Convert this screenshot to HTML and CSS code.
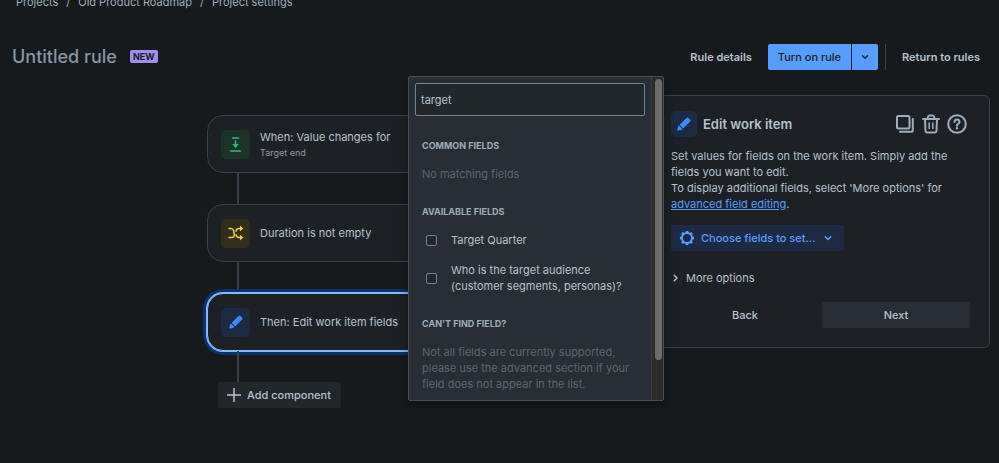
FILE: index.html
```html
<!DOCTYPE html>
<html lang="en">
<head>
	<title>Untitled rule - Project settings</title>
	<meta charset="utf-8">
	<meta name="viewport" content="width=device-width, initial-scale=1">
	<link rel="stylesheet" href="styles.css">
</head>
<body>

	<nav class="breadcrumbs" aria-label="Breadcrumbs">
		<a href="#">Projects</a>
		<span>/</span>
		<a href="#">Old Product Roadmap</a>
		<span>/</span>
		<a href="#">Project settings</a>
	</nav>

	<header class="rule-header">
		<h1 class="rule-title">Untitled rule</h1>
		<span class="badge">NEW</span>
		<div class="rule-actions">
			<button type="button" class="btn btn-link">Rule details</button>
			<div class="split">
				<button type="button" class="btn btn-primary">Turn on rule</button>
				<button type="button" class="btn btn-primary btn-arrow" aria-label="More">
					<svg width="8" height="8" viewBox="0 0 8 8"><path class="line" d="M1.5 2.8 4 5.2 6.5 2.8"/></svg>
				</button>
			</div>
			<span class="divider"></span>
			<button type="button" class="btn btn-link">Return to rules</button>
		</div>
	</header>

	<main class="builder">
		<!-- rule chain -->
		<section class="canvas">
			<div class="chain">
				<div class="card">
					<span class="tile tile-green">
						<svg width="15" height="19" viewBox="0 0 15 19"><path class="line" d="M4.5 3h6M7.5 6v5M2.5 16h10"/><path class="solid" d="M4.3 9h6.4L7.5 13.2z"/></svg>
					</span>
					<div>
						<div class="card-title">When: Value changes for</div>
						<div class="card-sub">Target end</div>
					</div>
				</div>
				<span class="connector"></span>
				<div class="card">
					<span class="tile tile-yellow">
						<svg width="18" height="18" viewBox="0 0 18 18"><path class="line" d="M2 4.5h2.2Q6 4.500 6.600 6.500L7.200 10.500Q7.800 13.500 4.200 13.500H2M9 7.200Q9.600 4.500 12 4.500h2M9 10.800Q9.600 13.500 12 13.500h2"/><path class="solid" d="M13 1.800 16.400 4.500 13 7.200zM13 10.800 16.400 13.500 13 16.200z"/></svg>
					</span>
					<div class="card-title">Duration is not empty</div>
				</div>
				<span class="connector"></span>
				<div class="card card-active">
					<span class="tile tile-blue">
						<svg width="18" height="18" viewBox="0 0 18 18"><path class="solid" d="M11.500 2.900q1-.9 2 0l1.600 1.600q.9 1 0 2L8.200 13.400 4.600 9.800zM3.900 10.600l3.500 3.500-1.200.8-3.400.7q-.6 0-.5-.6l.7-3.300z"/></svg>
					</span>
					<div class="card-title">Then: Edit work item fields</div>
				</div>
				<span class="connector"></span>
				<button type="button" class="btn btn-add">
					<svg width="14" height="14" viewBox="0 0 14 14"><path class="line" d="M7 0v14M0 7h14"/></svg>
					Add component
				</button>
			</div>
		</section>

		<!-- config panel -->
		<aside class="panel">
			<div class="panel-head">
				<span class="tile tile-small tile-blue">
					<svg width="18" height="18" viewBox="0 0 18 18"><path class="solid" d="M11.500 2.900q1-.9 2 0l1.600 1.600q.9 1 0 2L8.200 13.400 4.600 9.800zM3.900 10.600l3.500 3.500-1.200.8-3.400.7q-.6 0-.5-.6l.7-3.300z"/></svg>
				</span>
				<h2 class="panel-title">Edit work item</h2>
				<button type="button" class="icon-btn" aria-label="Duplicate">
					<svg width="20" height="20" viewBox="0 0 20 20"><rect class="thick" x="2" y="2" width="12.500" height="12.500" rx="1.500"/><path class="thick" d="M17.800 5v11.300q0 1.500-1.500 1.500H5"/></svg>
				</button>
				<button type="button" class="icon-btn" aria-label="Delete">
					<svg width="20" height="20" viewBox="0 0 20 20"><path class="thick" d="M2 5h16M6.800 5V3.300Q7 1.500 8.500 1.500h3q1.500 0 1.700 1.800V5M4 5l.5 12q.1 1.500 1.500 1.500h8q1.400 0 1.500-1.500L16 5"/><path class="line" d="M8.200 9v5.500M11.800 9v5.500"/></svg>
				</button>
				<button type="button" class="icon-btn" aria-label="Help">
					<svg width="20" height="20" viewBox="0 0 20 20"><circle class="thick" cx="10" cy="10" r="8.800"/><path class="thick" d="M7.500 8q0-2.500 2.500-2.500T12.500 8q0 1.200-1.300 1.900T10 11.800"/><circle class="solid" cx="10" cy="14.300" r="1.200"/></svg>
				</button>
			</div>

			<p class="panel-text">Set values for fields on the work item. Simply add the fields you want to edit.<br>To display additional fields, select 'More options' for <a href="#">advanced field editing</a>.</p>

			<button type="button" class="btn btn-choose">
				<svg width="16" height="16" viewBox="0 0 16 16"><circle class="thick" cx="8" cy="8" r="5"/><path class="solid" d="M6.300 3.500 6.800.9h2.400l.5 2.600zM6.300 12.500l.5 2.600h2.400l.5-2.600zM3.500 6.300.9 6.800v2.400l2.600.5zM12.500 6.300l2.600.5v2.400l-2.600.5zM3.700 6 2.100 3.800 3.800 2.100 6 3.700zM12.300 6l1.600-2.200-1.700-1.700L10 3.700zM3.700 10l-1.600 2.200 1.700 1.700L6 12.300zM12.300 10l1.600 2.200-1.700 1.700-2.200-1.600z"/></svg>
				Choose fields to set...
				<svg width="8" height="8" viewBox="0 0 8 8"><path class="line" d="M1.200 2.800 4 5.400 6.800 2.800"/></svg>
			</button>

			<button type="button" class="more">
				<svg width="8" height="8" viewBox="0 0 8 8"><path class="line" d="M2.300 1.200 5 4 2.300 6.800"/></svg>
				More options
			</button>

			<div class="panel-foot">
				<button type="button" class="btn">Back</button>
				<button type="button" class="btn btn-next">Next</button>
			</div>

			<!-- field picker, opens over the canvas -->
			<div class="picker">
				<div class="picker-body">
					<input class="search" type="text" value="target" aria-label="Search fields">
					<h3 class="group">Common fields</h3>
					<p class="hint">No matching fields</p>
					<h3 class="group">Available fields</h3>
					<label class="option"><input type="checkbox"><span>Target Quarter</span></label>
					<label class="option"><input type="checkbox"><span>Who is the target audience (customer segments, personas)?</span></label>
					<h3 class="group">Can't find field?</h3>
					<p class="hint">Not all fields are currently supported, please use the advanced section if your field does not appear in the list.</p>
				</div>
				<div class="track"><div class="thumb"></div></div>
			</div>
		</aside>
	</main>

</body>
</html>
```
FILE: styles.css
```css
* {
	box-sizing: border-box;
}
body {
	margin: 0;
	background-color: #161a1d;
	color: #b6c2cf;
	font-family: Inter, "Liberation Sans", sans-serif;
	font-size: 11px;
	line-height: 16px;
	overflow: hidden;
}
h1, h2, h3, p {
	margin: 0;
}
button, input {
	font-family: inherit;
	font-size: inherit;
	line-height: inherit;
	color: inherit;
}
button {
	border: none;
	background: none;
	padding: 0;
}
svg {
	display: block;
	flex: none;
}
.line, .thick {
	fill: none;
	stroke: currentColor;
	stroke-width: 1.5;
	stroke-linecap: round;
	stroke-linejoin: round;
}
.thick {
	stroke-width: 2;
}
.solid {
	fill: currentColor;
}

/* top of page */
.breadcrumbs {
	display: flex;
	gap: 8px;
	margin-top: -6px;
	padding-left: 16px;
	color: #9fadbc;
}
.breadcrumbs a {
	color: inherit;
	text-decoration: none;
}
.rule-header {
	display: flex;
	align-items: center;
	padding: 33px 12px 0;
}
.rule-title {
	color: #8696a7;
	font-size: 18px;
	font-weight: 500;
	line-height: 27px;
}
.badge {
	margin-left: 13px;
	padding: 0 3px;
	border-radius: 2px;
	background-color: #9f8fef;
	color: #1d2125;
	font-size: 9px;
	font-weight: 700;
	line-height: 13px;
}
.rule-actions {
	display: flex;
	align-items: center;
	margin-left: auto;
}
.btn {
	height: 26px;
	border-radius: 2px;
	font-weight: 500;
}
.btn-link {
	padding: 0 7px;
	font-weight: 600;
}
.split {
	display: flex;
	gap: 1px;
	margin: 0 7px 0 9px;
}
.btn-primary {
	padding: 0 10px;
	border-radius: 2px 0 0 2px;
	background-color: #579dff;
	color: #1d2125;
}
.btn-arrow {
	padding: 0 9px;
	border-radius: 0 2px 2px 0;
}
.divider {
	width: 1px;
	height: 26px;
	margin-right: 9px;
	background-color: #39424a;
}

/* rule chain */
.builder {
	display: flex;
	align-items: flex-start;
	padding: 25px 9px 0 12px;
}
.canvas {
	flex: 1;
	display: flex;
	justify-content: center;
	padding-top: 20px;
}
.chain {
	display: flex;
	flex-direction: column;
	align-items: flex-start;
	width: 248px;
}
.card {
	display: flex;
	align-items: center;
	gap: 10px;
	width: 100%;
	height: 58px;
	padding-left: 13px;
	border: 1px solid #39424a;
	border-radius: 16px;
	background-color: #1d2125;
}
.card-active {
	border-color: #85b8ff;
	box-shadow: 0 0 0 1px #85b8ff, 0 0 0 4px #09326c;
}
.card-title {
	line-height: 18px;
}
.card-sub {
	color: #8c9bab;
	font-size: 9px;
	line-height: 14px;
}
.tile {
	display: flex;
	align-items: center;
	justify-content: center;
	width: 29px;
	height: 29px;
	border-radius: 5px;
}
.tile-small {
	width: 26px;
	height: 26px;
}
.tile-green {
	background-color: #1c3329;
	color: #2abb7f;
}
.tile-yellow {
	background-color: #332e1b;
	color: #f5cd47;
}
.tile-blue {
	background-color: #1c2b41;
	color: #388bff;
}
.connector {
	width: 2px;
	height: 31px;
	margin-left: 30px;
	background-color: #39424a;
}
.btn-add {
	display: flex;
	align-items: center;
	gap: 6px;
	margin-left: 11px;
	padding: 0 10px 0 9px;
	background-color: #22272b;
}

/* config panel */
.panel {
	position: relative;
	width: 340px;
	padding: 15px 19px 19px 20px;
	border: 1px solid #39424a;
	border-radius: 6px;
	background-color: #1d2125;
}
.panel-head {
	display: flex;
	align-items: center;
	gap: 6px;
}
.panel-title {
	flex: 1;
	font-size: 13px;
	font-weight: 600;
}
.icon-btn {
	color: #9fadbc;
}
.icon-btn:last-child {
	margin-right: 3px;
}
.panel-text {
	margin-top: 11px;
}
.panel-text a {
	color: #579dff;
}
.btn-choose {
	display: flex;
	align-items: center;
	gap: 6px;
	margin-top: 13px;
	padding: 0 12px 0 8px;
	background-color: #1c2b41;
	color: #579dff;
}
.btn-choose svg:last-child {
	margin-left: 2px;
}
.more {
	display: flex;
	align-items: center;
	gap: 6px;
	margin-top: 19px;
	padding-left: 1px;
}
.panel-foot {
	display: grid;
	grid-template-columns: 1fr 1fr;
	gap: 3px;
	margin-top: 16px;
}
.btn-next {
	background-color: #282e33;
}

/* field picker */
.picker {
	position: absolute;
	top: -20px;
	left: -243px;
	display: flex;
	width: 256px;
	border: 1px solid #454f59;
	border-radius: 2px;
	background-color: #282e33;
	box-shadow: 0 4px 8px rgba(3, 4, 4, 0.4);
}
.picker-body {
	flex: 1;
	padding: 6px 6px 8px;
}
.search {
	display: block;
	width: 100%;
	height: 33px;
	padding: 0 5px;
	border: 1px solid #738496;
	border-radius: 2px;
	outline: none;
	background-color: #22272b;
}
.group {
	margin: 22px 0 12px 7px;
	color: #9fadbc;
	font-size: 9px;
	font-weight: 700;
	text-transform: uppercase;
}
.hint {
	margin: 0 7px;
	color: #596773;
}
.option {
	display: flex;
	align-items: center;
	gap: 14px;
	margin: 0 7px 14px 11px;
}
.option input {
	flex: none;
	appearance: none;
	width: 11px;
	height: 11px;
	margin: 0;
	border: 1px solid #738496;
	border-radius: 2px;
	background-color: #22272b;
}
.track {
	width: 12px;
	padding: 2px;
	border-left: 1px solid #39424a;
	background-color: #2b2b2b;
}
.thumb {
	width: 7px;
	height: 88%;
	margin-left: 1px;
	border-radius: 4px;
	background-color: #6b6b6b;
}
```
